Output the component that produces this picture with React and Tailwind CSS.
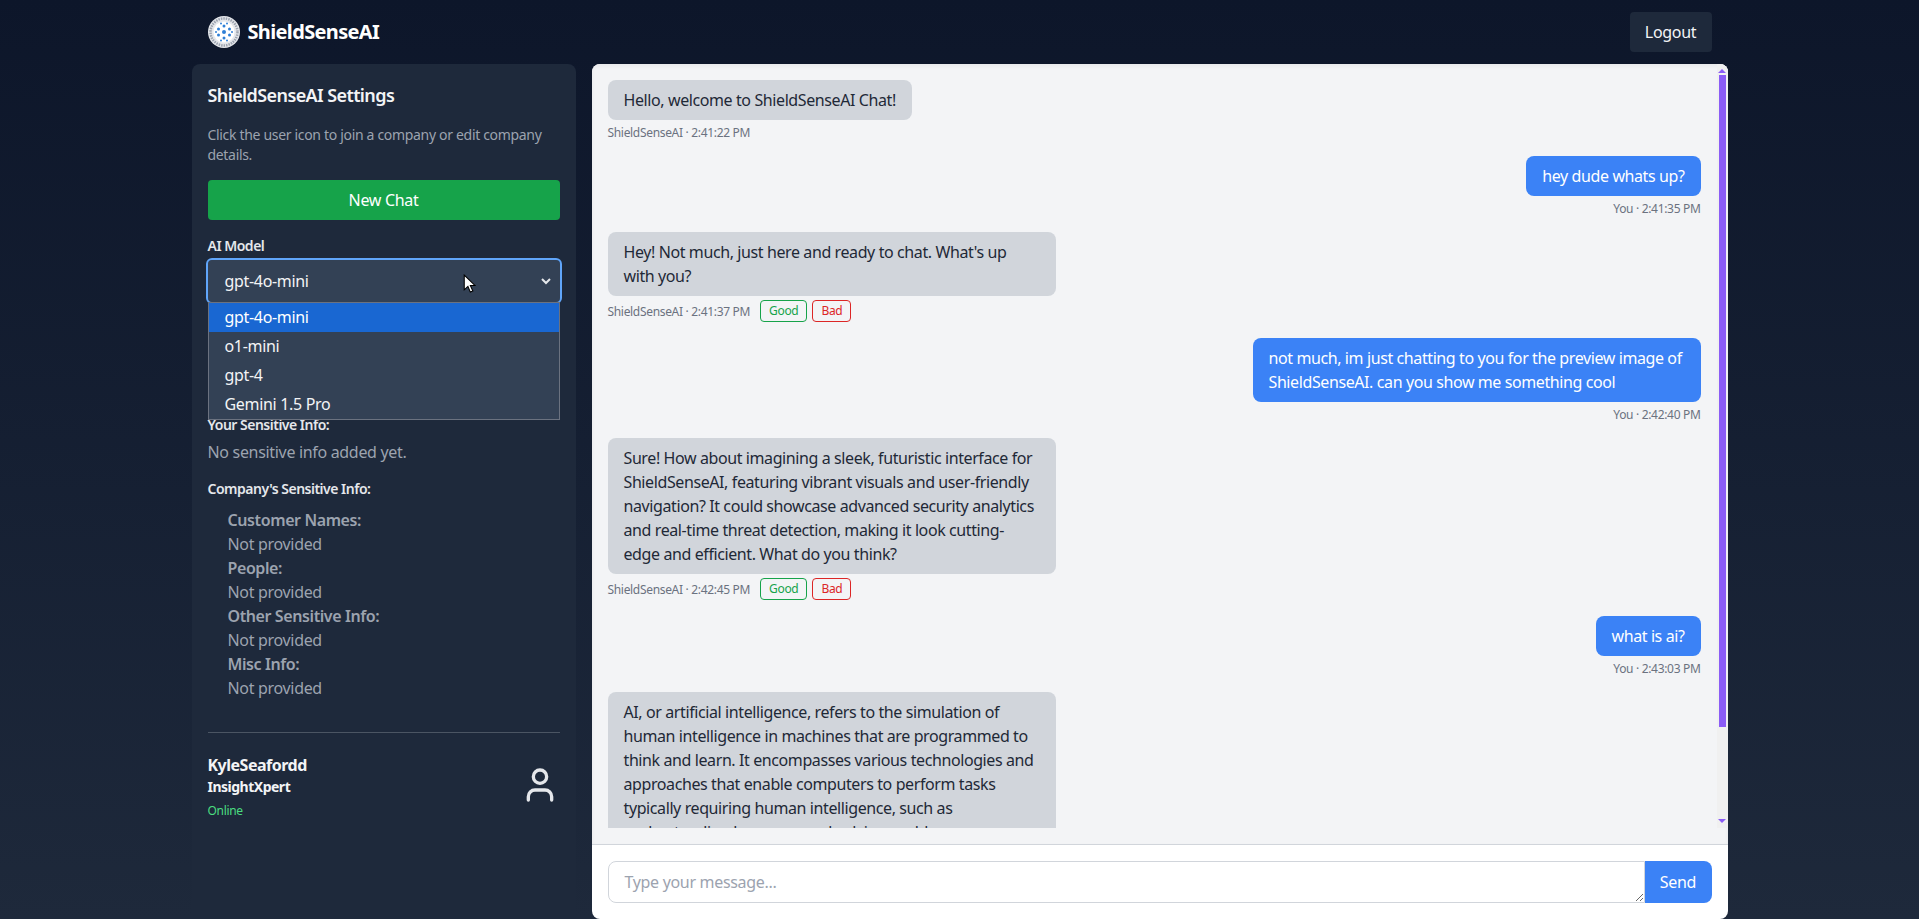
import React from "react";
import { User } from "lucide-react";

const botMessages = {
  hello: "Hello, welcome to ShieldSenseAI Chat!",
  hey: "Hey! Not much, just here and ready to chat. What's up with you?",
  sure: "Sure! How about imagining a sleek, futuristic interface for ShieldSenseAI, featuring vibrant visuals and user-friendly navigation? It could showcase advanced security analytics and real-time threat detection, making it look cutting-edge and efficient. What do you think?",
  ai: "AI, or artificial intelligence, refers to the simulation of human intelligence in machines that are programmed to think and learn. It encompasses various technologies and approaches that enable computers to perform tasks typically requiring human intelligence, such as understanding language and solving problems.",
};

const modelOptions = ["gpt-4o-mini", "o1-mini", "gpt-4", "Gemini 1.5 Pro"];

const companyInfo = ["Customer Names:", "People:", "Other Sensitive Info:", "Misc Info:"];

const Logo = () => (
  <svg viewBox="0 0 32 32" className="w-8 h-8 shrink-0">
    <circle cx="16" cy="16" r="16" fill="#e5e7eb" />
    <circle cx="16" cy="16" r="13.5" fill="none" stroke="#9ca3af" strokeWidth="2.5" strokeDasharray="1.5 1" />
    <circle cx="16" cy="16" r="10.5" fill="#ffffff" />
    <g fill="#2f7fd6">
      <circle cx="16" cy="16" r="2" />
      <circle cx="16" cy="10" r="1.5" />
      <circle cx="16" cy="22" r="1.5" />
      <circle cx="10.5" cy="13" r="1.5" />
      <circle cx="21.5" cy="13" r="1.5" />
      <circle cx="10.5" cy="19" r="1.5" />
      <circle cx="21.5" cy="19" r="1.5" />
      <circle cx="13" cy="7.5" r="1" />
      <circle cx="19" cy="7.5" r="1" />
      <circle cx="8" cy="16" r="1" />
      <circle cx="24" cy="16" r="1" />
      <circle cx="13" cy="24.5" r="1" />
      <circle cx="19" cy="24.5" r="1" />
    </g>
  </svg>
);

const BotMessage = ({ text, time, rate }) => (
  <div className="mb-4 flex flex-col items-start">
    <div className="max-w-md px-4 py-2 rounded-lg bg-[#d1d5db] text-[#1f2937] tracking-[-0.4px]">{text}</div>
    <div className="mt-1 flex items-center text-xs text-[#6b7280]">
      <span className="h-4 leading-[18px]">ShieldSenseAI · {time}</span>
      {rate && (
        <div className="ml-2.5 flex gap-[5px]">
          <button className="h-[22px] px-2 rounded border border-[#16a34a] text-[#16a34a]">Good</button>
          <button className="h-[22px] px-2 rounded border border-[#dc2626] text-[#dc2626]">Bad</button>
        </div>
      )}
    </div>
  </div>
);

const UserMessage = ({ text, time }) => (
  <div className="mb-4 flex flex-col items-end">
    <div className="max-w-md px-4 py-2 rounded-lg bg-[#3b82f6] text-white tracking-[-0.4px]">{text}</div>
    <div className="mt-1 h-4 leading-[18px] text-xs text-[#6b7280]">You · {time}</div>
  </div>
);

// headless browser hides real scrollbars, so the rail is drawn
const ScrollRail = () => (
  <div className="w-[11px] shrink-0 flex flex-col items-center bg-[#f0f0f0]">
    <div className="mt-[5px] w-0 h-0 border-x-[4px] border-x-transparent border-b-[4px] border-b-[#8b5cf6]" />
    <div className="mt-[2px] w-[7px] h-[652px] bg-[#8b5cf6]" />
    <div className="mt-auto mb-[5px] w-0 h-0 border-x-[4px] border-x-transparent border-t-[4px] border-t-[#8b5cf6]" />
  </div>
);

const App = () => {
  return (
    <div className="h-[919px] overflow-hidden flex flex-col items-center bg-gradient-to-b from-[#0d162a] to-[#1e293b] font-['Noto_Sans',sans-serif] tracking-[-0.32px]">
      <header className="w-[1536px] h-16 shrink-0 px-4 flex items-center justify-between">
        <div className="flex items-center gap-2">
          <Logo />
          <span className="text-xl font-bold text-white tracking-[-0.65px]">ShieldSenseAI</span>
        </div>
        <button className="w-[82px] h-10 rounded bg-[#1e293b] text-[#f3f4f6]">Logout</button>
      </header>

      <div className="w-[1536px] flex-1 min-h-0 flex gap-4">
        <aside className="w-96 shrink-0 p-4 rounded-t-lg bg-[#1e293b] flex flex-col">
          <h2 className="pt-px text-lg font-semibold text-[#f3f4f6] leading-7 mb-4 tracking-[-0.6px]">ShieldSenseAI Settings</h2>
          <p className="text-sm text-[#9ca3af] mb-[15px]">Click the user icon to join a company or edit company details.</p>
          <button className="w-full h-10 shrink-0 rounded bg-[#16a34a] text-white">New Chat</button>

          <label className="mt-4 mb-1 text-sm font-semibold text-[#e5e7eb] tracking-[-0.5px]">AI Model</label>
          <div className="relative">
            <div className="h-[42px] pl-[17px] pr-2 flex items-center justify-between rounded bg-[#334155] text-[#f3f4f6] outline-2 outline-[#60a5fa]">
              <span>gpt-4o-mini</span>
              <svg viewBox="0 0 12 12" className="w-3 h-3 text-[#e5e7eb]" fill="none" stroke="currentColor" strokeWidth="2">
                <path d="M2 4l4 4 4-4" />
              </svg>
            </div>
            <svg viewBox="0 0 12 19" className="absolute left-[255px] top-[14px] w-[13px] h-[20px]">
              <path d="M1 1v14l3.5-3.2 2.3 5.4 2.4-1-2.4-5.2h4.6z" fill="#ffffff" stroke="#000000" strokeWidth="1" />
            </svg>
            <ul className="absolute left-0 top-[42px] w-full h-[118px] border border-[#6b7280] bg-[#334155] text-[#f3f4f6]">
              {modelOptions.map((opt, i) => (
                <li key={opt} className={i === 0 ? "h-[29px] pl-4 leading-[29px] bg-[#1967d2] text-white" : "h-[29px] pl-4 leading-[29px]"}>
                  {opt}
                </li>
              ))}
            </ul>
          </div>

          <h3 className="mt-[113px] text-sm font-semibold text-[#e5e7eb] tracking-[-0.5px]">Your Sensitive Info:</h3>
          <p className="mt-[5px] text-[#9ca3af]">No sensitive info added yet.</p>
          <h3 className="mt-[15px] text-sm font-semibold text-[#e5e7eb] tracking-[-0.5px]">Company's Sensitive Info:</h3>
          <div className="mt-[9px] pl-5">
            {companyInfo.map((label) => (
              <div key={label}>
                <div className="font-semibold text-[#9ca3af] tracking-[-0.4px]">{label}</div>
                <div className="text-[#9ca3af]">Not provided</div>
              </div>
            ))}
          </div>

          <div className="mt-8 pt-5 border-t border-[#4b5563] flex items-start justify-between">
            <div>
              <div className="font-bold text-[#f3f4f6] tracking-[-0.5px]">KyleSeafordd</div>
              <div className="text-sm font-bold text-[#f3f4f6] tracking-[-0.5px]">InsightXpert</div>
              <div className="mt-1.5 text-xs text-[#4ade80]">Online</div>
            </div>
            <User size={40} className="mt-3 text-[#e5e7eb]" strokeWidth={2} />
          </div>
        </aside>

        <main className="flex-1 min-w-0 rounded-lg bg-white flex flex-col overflow-hidden">
          <div className="flex-1 min-h-0 pb-4 bg-[#f3f4f6] shadow-inner">
            <div className="h-full flex">
              <div className="flex-1 min-w-0 overflow-hidden pt-4 px-4">
                <BotMessage text={botMessages.hello} time="2:41:22 PM" />
                <UserMessage text="hey dude whats up?" time="2:41:35 PM" />
                <BotMessage text={botMessages.hey} time="2:41:37 PM" rate />
                <UserMessage text="not much, im just chatting to you for the preview image of ShieldSenseAI. can you show me something cool" time="2:42:40 PM" />
                <BotMessage text={botMessages.sure} time="2:42:45 PM" rate />
                <UserMessage text="what is ai?" time="2:43:03 PM" />
                <BotMessage text={botMessages.ai} time="2:43:05 PM" rate />
              </div>
              <ScrollRail />
            </div>
          </div>
          <div className="p-4 border-t border-[#d1d5db] flex">
            <textarea
              rows={1}
              placeholder="Type your message..."
              className="flex-1 h-[42px] px-4 py-2 rounded-l-lg border border-[#d1d5db] outline-none placeholder:text-[#9ca3af]"
            />
            <button className="w-[67px] h-[42px] rounded-r-lg bg-[#3b82f6] text-white">Send</button>
          </div>
        </main>
      </div>
    </div>
  );
};

export default App;
